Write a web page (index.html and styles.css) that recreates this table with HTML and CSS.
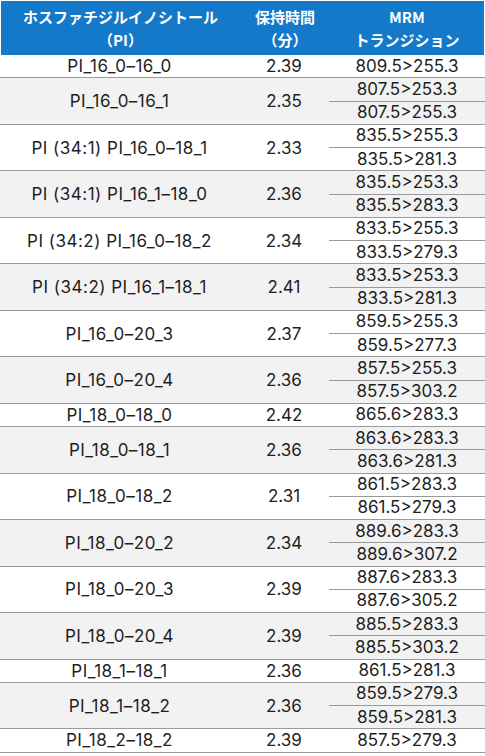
FILE: index.html
```html
<!DOCTYPE html>
<html lang="ja">
<head>
<meta charset="utf-8">
<link rel="stylesheet" href="styles.css">
</head>
<body>
<div class="tbl">
  <div class="head">
    <div class="h c1">ホスファチジルイノシトール<br>（PI）</div>
    <div class="h c2">保持時間<br>（分）</div>
    <div class="h c3">MRM<br>トランジション</div>
  </div>
  <div class="row"><div class="c1">PI_16_0–16_0</div><div class="c2">2.39</div><div class="c3"><div class="sub">809.5&gt;255.3</div></div></div>
  <div class="row alt"><div class="c1">PI_16_0–16_1</div><div class="c2">2.35</div><div class="c3"><div class="sub">807.5&gt;253.3</div><div class="sub">807.5&gt;255.3</div></div></div>
  <div class="row"><div class="c1">PI (34:1) PI_16_0–18_1</div><div class="c2">2.33</div><div class="c3"><div class="sub">835.5&gt;255.3</div><div class="sub">835.5&gt;281.3</div></div></div>
  <div class="row alt"><div class="c1">PI (34:1) PI_16_1–18_0</div><div class="c2">2.36</div><div class="c3"><div class="sub">835.5&gt;253.3</div><div class="sub">835.5&gt;283.3</div></div></div>
  <div class="row"><div class="c1">PI (34:2) PI_16_0–18_2</div><div class="c2">2.34</div><div class="c3"><div class="sub">833.5&gt;255.3</div><div class="sub">833.5&gt;279.3</div></div></div>
  <div class="row alt"><div class="c1">PI (34:2) PI_16_1–18_1</div><div class="c2">2.41</div><div class="c3"><div class="sub">833.5&gt;253.3</div><div class="sub">833.5&gt;281.3</div></div></div>
  <div class="row"><div class="c1">PI_16_0–20_3</div><div class="c2">2.37</div><div class="c3"><div class="sub">859.5&gt;255.3</div><div class="sub">859.5&gt;277.3</div></div></div>
  <div class="row alt"><div class="c1">PI_16_0–20_4</div><div class="c2">2.36</div><div class="c3"><div class="sub">857.5&gt;255.3</div><div class="sub">857.5&gt;303.2</div></div></div>
  <div class="row"><div class="c1">PI_18_0–18_0</div><div class="c2">2.42</div><div class="c3"><div class="sub">865.6&gt;283.3</div></div></div>
  <div class="row alt"><div class="c1">PI_18_0–18_1</div><div class="c2">2.36</div><div class="c3"><div class="sub">863.6&gt;283.3</div><div class="sub">863.6&gt;281.3</div></div></div>
  <div class="row"><div class="c1">PI_18_0–18_2</div><div class="c2">2.31</div><div class="c3"><div class="sub">861.5&gt;283.3</div><div class="sub">861.5&gt;279.3</div></div></div>
  <div class="row alt"><div class="c1">PI_18_0–20_2</div><div class="c2">2.34</div><div class="c3"><div class="sub">889.6&gt;283.3</div><div class="sub">889.6&gt;307.2</div></div></div>
  <div class="row"><div class="c1">PI_18_0–20_3</div><div class="c2">2.39</div><div class="c3"><div class="sub">887.6&gt;283.3</div><div class="sub">887.6&gt;305.2</div></div></div>
  <div class="row alt"><div class="c1">PI_18_0–20_4</div><div class="c2">2.39</div><div class="c3"><div class="sub">885.5&gt;283.3</div><div class="sub">885.5&gt;303.2</div></div></div>
  <div class="row"><div class="c1">PI_18_1–18_1</div><div class="c2">2.36</div><div class="c3"><div class="sub">861.5&gt;281.3</div></div></div>
  <div class="row alt"><div class="c1">PI_18_1–18_2</div><div class="c2">2.36</div><div class="c3"><div class="sub">859.5&gt;279.3</div><div class="sub">859.5&gt;281.3</div></div></div>
  <div class="row"><div class="c1">PI_18_2–18_2</div><div class="c2">2.39</div><div class="c3"><div class="sub">857.5&gt;279.3</div></div></div>
</div>
</body>
</html>
```
FILE: styles.css
```css
html, body {
  margin: 0;
  padding: 0;
  background: #ffffff;
}
.tbl {
  width: 485px;
  padding-top: 1px;
  font-family: Inter, "Noto Sans CJK JP", sans-serif;
  color: #1e1e1e;
  font-size: 17px;
}
.head {
  display: flex;
  margin: 0 1px;
  height: 54px;
  background: #1479c9;
  color: #ffffff;
}
.h {
  display: flex;
  align-items: center;
  justify-content: center;
  text-align: center;
  font-family: "Noto Sans CJK JP", sans-serif;
  font-weight: 700;
  font-size: 15px;
  line-height: 23px;
}
.c1 { width: 239px; }
.c2 { width: 90px; }
.c3 { flex: 1; }
.row {
  display: flex;
  border-bottom: 1px solid #9a9a9a;
}
.row.alt { background: #f2f2f2; }
.row .c1, .row .c2 {
  display: flex;
  align-items: center;
  justify-content: center;
}
.row .c1 { letter-spacing: 0.5px; }
.row .c3 {
  display: flex;
  flex-direction: column;
}
.sub {
  height: 22.25px;
  display: flex;
  align-items: center;
  justify-content: center;
  line-height: 1;
}
.sub + .sub {
  border-top: 1px solid #9a9a9a;
}
```
